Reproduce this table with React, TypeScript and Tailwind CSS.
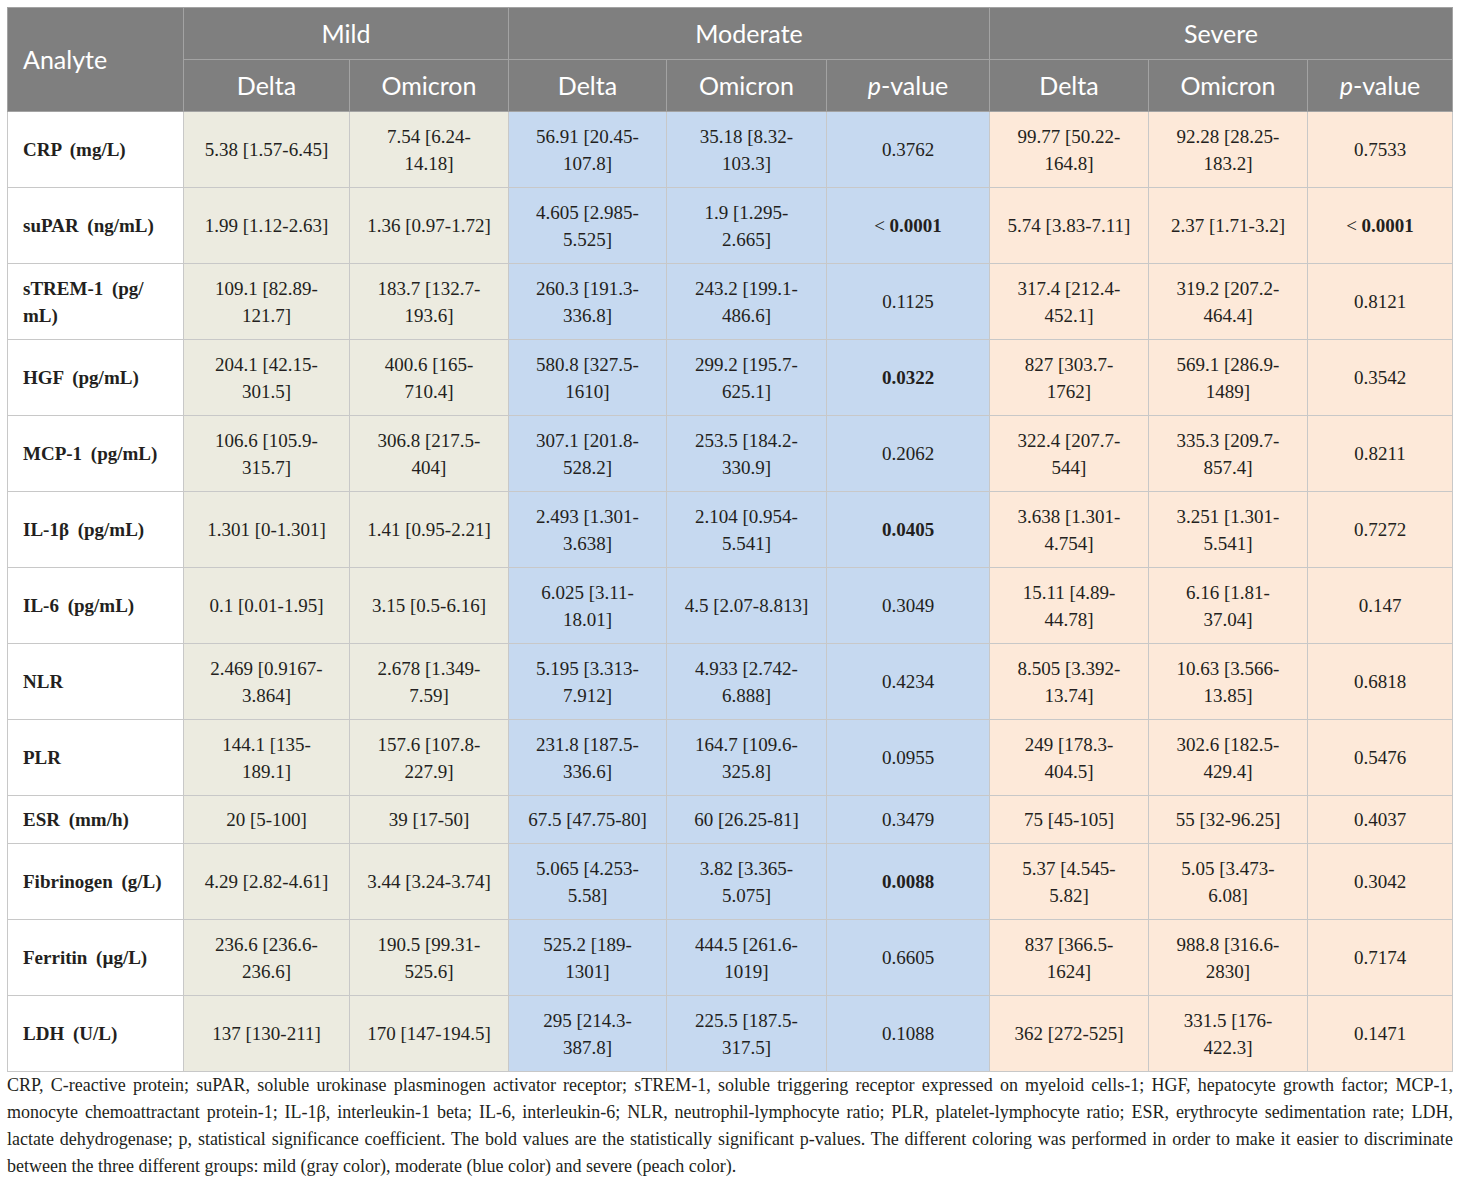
const serif = "font-['Liberation_Serif','Times_New_Roman',serif]"

// '*' marks a bold (significant) p-value, '\n' marks a forced line break
const rows: { label: string; cells: string[] }[] = [
  {
    label: 'CRP (mg/L)',
    cells: ['5.38 [1.57-6.45]', '7.54 [6.24-\n14.18]', '56.91 [20.45-\n107.8]', '35.18 [8.32-\n103.3]', '0.3762', '99.77 [50.22-\n164.8]', '92.28 [28.25-\n183.2]', '0.7533'],
  },
  {
    label: 'suPAR (ng/mL)',
    cells: ['1.99 [1.12-2.63]', '1.36 [0.97-1.72]', '4.605 [2.985-\n5.525]', '1.9 [1.295-\n2.665]', '*< 0.0001', '5.74 [3.83-7.11]', '2.37 [1.71-3.2]', '*< 0.0001'],
  },
  {
    label: 'sTREM-1 (pg/\nmL)',
    cells: ['109.1 [82.89-\n121.7]', '183.7 [132.7-\n193.6]', '260.3 [191.3-\n336.8]', '243.2 [199.1-\n486.6]', '0.1125', '317.4 [212.4-\n452.1]', '319.2 [207.2-\n464.4]', '0.8121'],
  },
  {
    label: 'HGF (pg/mL)',
    cells: ['204.1 [42.15-\n301.5]', '400.6 [165-\n710.4]', '580.8 [327.5-\n1610]', '299.2 [195.7-\n625.1]', '*0.0322', '827 [303.7-\n1762]', '569.1 [286.9-\n1489]', '0.3542'],
  },
  {
    label: 'MCP-1 (pg/mL)',
    cells: ['106.6 [105.9-\n315.7]', '306.8 [217.5-\n404]', '307.1 [201.8-\n528.2]', '253.5 [184.2-\n330.9]', '0.2062', '322.4 [207.7-\n544]', '335.3 [209.7-\n857.4]', '0.8211'],
  },
  {
    label: 'IL-1β (pg/mL)',
    cells: ['1.301 [0-1.301]', '1.41 [0.95-2.21]', '2.493 [1.301-\n3.638]', '2.104 [0.954-\n5.541]', '*0.0405', '3.638 [1.301-\n4.754]', '3.251 [1.301-\n5.541]', '0.7272'],
  },
  {
    label: 'IL-6 (pg/mL)',
    cells: ['0.1 [0.01-1.95]', '3.15 [0.5-6.16]', '6.025 [3.11-\n18.01]', '4.5 [2.07-8.813]', '0.3049', '15.11 [4.89-\n44.78]', '6.16 [1.81-\n37.04]', '0.147'],
  },
  {
    label: 'NLR',
    cells: ['2.469 [0.9167-\n3.864]', '2.678 [1.349-\n7.59]', '5.195 [3.313-\n7.912]', '4.933 [2.742-\n6.888]', '0.4234', '8.505 [3.392-\n13.74]', '10.63 [3.566-\n13.85]', '0.6818'],
  },
  {
    label: 'PLR',
    cells: ['144.1 [135-\n189.1]', '157.6 [107.8-\n227.9]', '231.8 [187.5-\n336.6]', '164.7 [109.6-\n325.8]', '0.0955', '249 [178.3-\n404.5]', '302.6 [182.5-\n429.4]', '0.5476'],
  },
  {
    label: 'ESR (mm/h)',
    cells: ['20 [5-100]', '39 [17-50]', '67.5 [47.75-80]', '60 [26.25-81]', '0.3479', '75 [45-105]', '55 [32-96.25]', '0.4037'],
  },
  {
    label: 'Fibrinogen (g/L)',
    cells: ['4.29 [2.82-4.61]', '3.44 [3.24-3.74]', '5.065 [4.253-\n5.58]', '3.82 [3.365-\n5.075]', '*0.0088', '5.37 [4.545-\n5.82]', '5.05 [3.473-\n6.08]', '0.3042'],
  },
  {
    label: 'Ferritin (µg/L)',
    cells: ['236.6 [236.6-\n236.6]', '190.5 [99.31-\n525.6]', '525.2 [189-\n1301]', '444.5 [261.6-\n1019]', '0.6605', '837 [366.5-\n1624]', '988.8 [316.6-\n2830]', '0.7174'],
  },
  {
    label: 'LDH (U/L)',
    cells: ['137 [130-211]', '170 [147-194.5]', '295 [214.3-\n387.8]', '225.5 [187.5-\n317.5]', '0.1088', '362 [272-525]', '331.5 [176-\n422.3]', '0.1471'],
  },
]

const groupBg = [
  'bg-[#ecebe0]', 'bg-[#ecebe0]',
  'bg-[#c6d9f0]', 'bg-[#c6d9f0]', 'bg-[#c6d9f0]',
  'bg-[#fde9d9]', 'bg-[#fde9d9]', 'bg-[#fde9d9]',
]

const colWidths = ['w-[176px]', 'w-[166px]', 'w-[159px]', 'w-[158px]', 'w-[160px]', 'w-[163px]', 'w-[159px]', 'w-[159px]', 'w-[145px]']

const footer = [
  'CRP, C-reactive protein; suPAR, soluble urokinase plasminogen activator receptor; sTREM-1, soluble triggering receptor expressed on myeloid cells-1; HGF, hepatocyte growth factor; MCP-1,',
  'monocyte chemoattractant protein-1; IL-1β, interleukin-1 beta; IL-6, interleukin-6; NLR, neutrophil-lymphocyte ratio; PLR, platelet-lymphocyte ratio; ESR, erythrocyte sedimentation rate; LDH,',
  'lactate dehydrogenase; p, statistical significance coefficient. The bold values are the statistically significant p-values. The different coloring was performed in order to make it easier to discriminate',
  'between the three different groups: mild (gray color), moderate (blue color) and severe (peach color).',
]

function Cell({ value }: { value: string }) {
  if (value.startsWith('*')) {
    const v = value.slice(1)
    if (v.startsWith('< ')) {
      return (
        <>
          {'< '}
          <b>{v.slice(2)}</b>
        </>
      )
    }
    return <b>{v}</b>
  }
  return <>{value}</>
}

function HeadCell({
  children,
  className = '',
  colSpan,
  rowSpan,
}: {
  children: React.ReactNode
  className?: string
  colSpan?: number
  rowSpan?: number
}) {
  return (
    <th
      colSpan={colSpan}
      rowSpan={rowSpan}
      className={`border border-[#a3a3a3] font-normal text-white text-[25px] leading-none ${className}`}
    >
      {children}
    </th>
  )
}

function PValue() {
  return (
    <>
      <i>p</i>-value
    </>
  )
}

export default function App() {
  return (
    <div className="bg-white w-[1460px] min-h-[1183px] pt-[7px] px-[7px] text-[#231f20]">
      <table className="table-fixed border-collapse w-[1446px] border border-[#c8c8c8]">
        <colgroup>
          {colWidths.map((w, i) => (
            <col key={i} className={w} />
          ))}
        </colgroup>
        <thead className="bg-[#7f7f7f] font-['Lato','Open_Sans',sans-serif]">
          <tr className="h-[52px]">
            <HeadCell rowSpan={2} className="text-left pl-[15px]">
              Analyte
            </HeadCell>
            <HeadCell colSpan={2}>Mild</HeadCell>
            <HeadCell colSpan={3}>Moderate</HeadCell>
            <HeadCell colSpan={3}>Severe</HeadCell>
          </tr>
          <tr className="h-[52px]">
            <HeadCell>Delta</HeadCell>
            <HeadCell>Omicron</HeadCell>
            <HeadCell>Delta</HeadCell>
            <HeadCell>Omicron</HeadCell>
            <HeadCell><PValue /></HeadCell>
            <HeadCell>Delta</HeadCell>
            <HeadCell>Omicron</HeadCell>
            <HeadCell><PValue /></HeadCell>
          </tr>
        </thead>
        <tbody className={`${serif} text-[19px] leading-[27px]`}>
          {rows.map((row) => (
            <tr key={row.label} className={row.label.startsWith('ESR') ? 'h-[48px]' : 'h-[76px]'}>
              <td className="border border-[#c8c8c8] bg-white pl-[15px] font-bold whitespace-pre-line [word-spacing:4px]">
                {row.label}
              </td>
              {row.cells.map((c, i) => (
                <td
                  key={i}
                  className={`border border-[#c8c8c8] text-center whitespace-pre-line ${groupBg[i]}`}
                >
                  <Cell value={c} />
                </td>
              ))}
            </tr>
          ))}
        </tbody>
      </table>
      <div className={`${serif} text-[18px] leading-[27px] w-[1446px]`}>
        {footer.map((line, i) => (
          <p
            key={i}
            className={`whitespace-nowrap ${i < footer.length - 1 ? 'text-justify [text-align-last:justify]' : 'text-left'}`}
          >
            {line}
          </p>
        ))}
      </div>
    </div>
  )
}
